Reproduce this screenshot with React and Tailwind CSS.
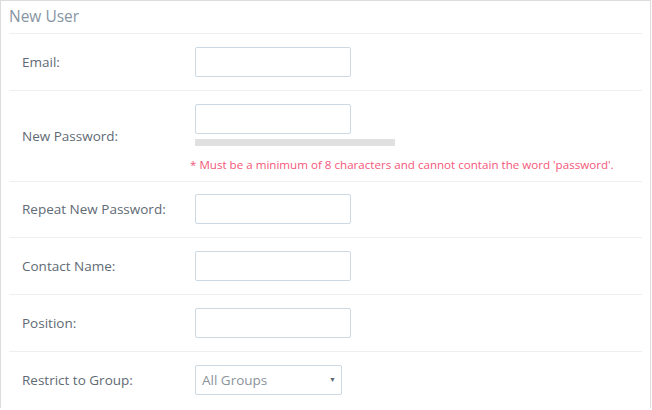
const font = { fontFamily: "'Open Sans', Lato, sans-serif" };

function Field({ label, children, className = "" }) {
  return (
    <div className={"mx-[8px] border-t border-[#efefef] " + className}>
      <div className="flex items-center">
        <div className="w-[186px] pl-[13px] text-[13.5px] text-[#5f6a74]">{label}</div>
        {children}
      </div>
    </div>
  );
}

function TextInput() {
  return (
    <input
      type="text"
      className="h-[30px] w-[156px] rounded-[2px] border border-[#ccd8e2] bg-white px-2 text-[13px] outline-none"
    />
  );
}

export default function App() {
  return (
    <div className="min-h-[410px] bg-white" style={font}>
      <div className="w-[651px] border-l border-r border-t border-[#dcdcdc]">
        <div className="flex h-[32px] items-center pl-[8px] text-[15.5px] text-[#8795a3]">New User</div>

        <Field label="Email:" className="py-[13px]">
          <TextInput />
        </Field>

        <div className="mx-[8px] border-t border-[#efefef] pt-[13px] pb-[8px]">
          <div className="flex items-center">
            <div className="w-[186px] pl-[13px] pt-[22px] text-[13.5px] text-[#5f6a74]">New Password:</div>
            <div className="flex flex-col">
              <TextInput />
              <div className="mt-[5px] h-[7px] w-[200px] bg-[#e0e0e0]" />
            </div>
          </div>
          <div className="mt-[11px] pl-[181px] text-[11.6px] leading-[16px] text-[#f5577a]">
            * Must be a minimum of 8 characters and cannot contain the word 'password'.
          </div>
        </div>

        <Field label="Repeat New Password:" className="pt-[12px] pb-[13px]">
          <TextInput />
        </Field>
        <Field label="Contact Name:" className="pt-[13px] pb-[13px]">
          <TextInput />
        </Field>
        <Field label="Position:" className="pt-[13px] pb-[13px]">
          <TextInput />
        </Field>
        <Field label="Restrict to Group:" className="pt-[13px] pb-[13px]">
          <div className="flex h-[30px] w-[147px] items-center justify-between rounded-[2px] border border-[#ccd8e2] bg-white pl-[6px] pr-[5px]">
            <span className="text-[13.5px] text-[#8a939b]">All Groups</span>
            <span className="text-[7px] text-[#5f6870]">▼</span>
          </div>
        </Field>
      </div>
    </div>
  );
}
